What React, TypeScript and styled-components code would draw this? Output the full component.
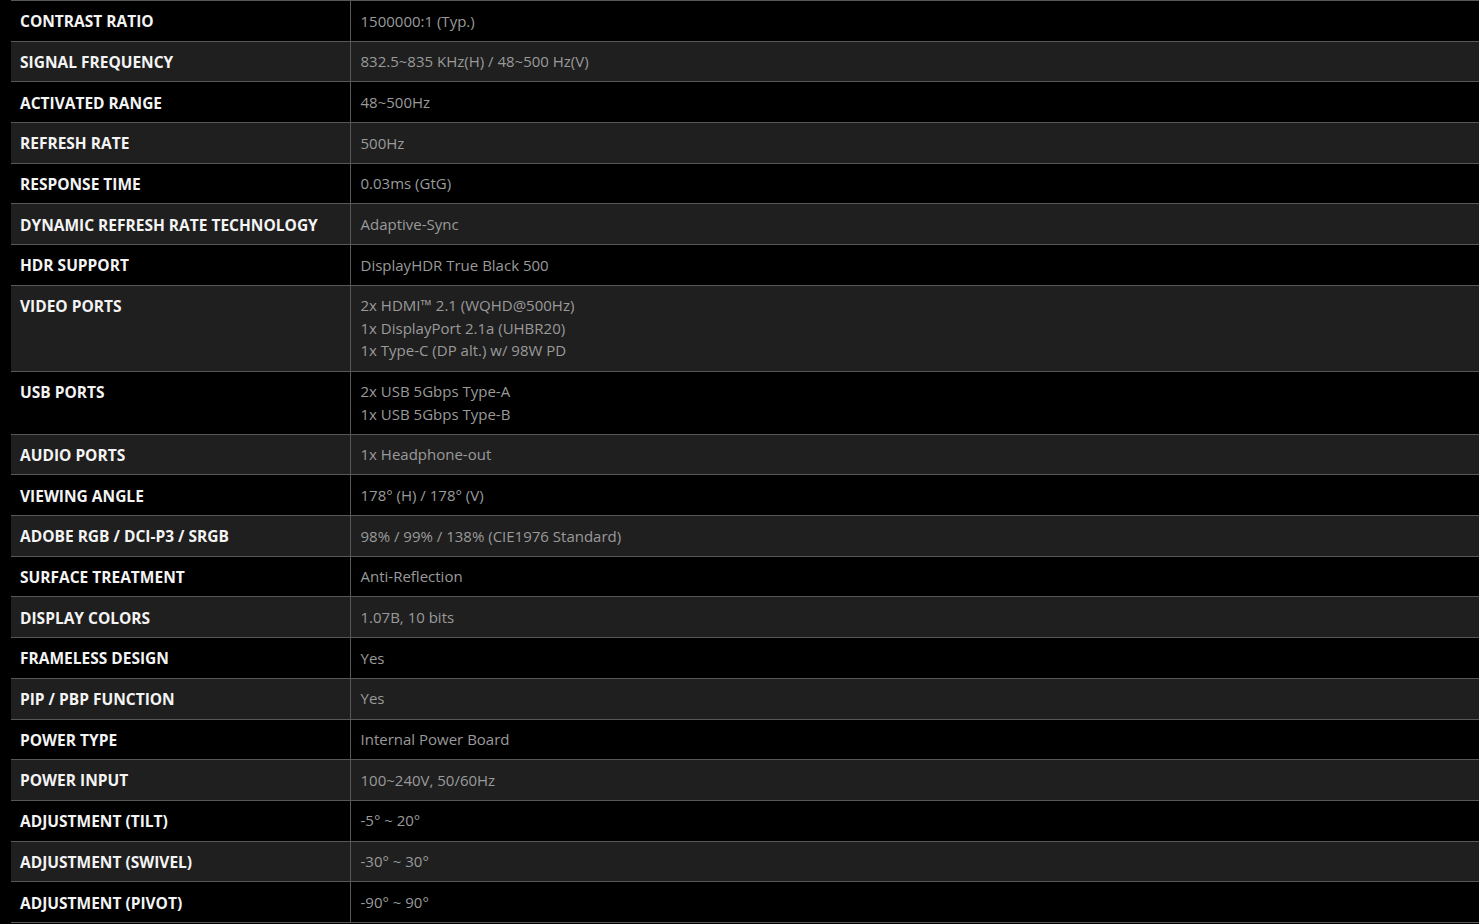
import React from "react";
import styled, { createGlobalStyle } from "styled-components";

const Global = createGlobalStyle`
  html, body { margin: 0; padding: 0; background: #000; }
  body { font-family: "Open Sans", "Noto Sans", sans-serif; }
`;

const Page = styled.div`
  background: #000;
  min-height: 924px;
  padding-left: 11px;
  overflow: hidden;
`;

const Table = styled.table`
  width: 1500px;
  border-collapse: collapse;
  border-top: 1px solid #575757;
`;

const Row = styled.tr<{ $alt: boolean }>`
  background: ${(p) => (p.$alt ? "#1f1f1f" : "#000")};
  border-bottom: 1px solid #575757;
`;

const Label = styled.th`
  width: 339px;
  box-sizing: border-box;
  text-align: left;
  vertical-align: top;
  padding: 9.3px 9px 7.9px 9px;
  font-family: "Open Sans", sans-serif;
  font-weight: 700;
  font-size: 15.5px;
  line-height: 22.5px;
  color: #f4f4f4;
  border-right: 1px solid #575757;
`;

const Value = styled.td`
  vertical-align: top;
  padding: 8.6px 10px;
  font-family: "Open Sans", sans-serif;
  font-size: 15px;
  line-height: 22.5px;
  color: #9a9a9a;
`;

const specs: [string, string[]][] = [
  ["CONTRAST RATIO", ["1500000:1 (Typ.)"]],
  ["SIGNAL FREQUENCY", ["832.5~835 KHz(H) / 48~500 Hz(V)"]],
  ["ACTIVATED RANGE", ["48~500Hz"]],
  ["REFRESH RATE", ["500Hz"]],
  ["RESPONSE TIME", ["0.03ms (GtG)"]],
  ["DYNAMIC REFRESH RATE TECHNOLOGY", ["Adaptive-Sync"]],
  ["HDR SUPPORT", ["DisplayHDR True Black 500"]],
  [
    "VIDEO PORTS",
    [
      "2x HDMI™ 2.1 (WQHD@500Hz)",
      "1x DisplayPort 2.1a (UHBR20)",
      "1x Type-C (DP alt.) w/ 98W PD",
    ],
  ],
  ["USB PORTS", ["2x USB 5Gbps Type-A", "1x USB 5Gbps Type-B"]],
  ["AUDIO PORTS", ["1x Headphone-out"]],
  ["VIEWING ANGLE", ["178° (H) / 178° (V)"]],
  ["ADOBE RGB / DCI-P3 / SRGB", ["98% / 99% / 138% (CIE1976 Standard)"]],
  ["SURFACE TREATMENT", ["Anti-Reflection"]],
  ["DISPLAY COLORS", ["1.07B, 10 bits"]],
  ["FRAMELESS DESIGN", ["Yes"]],
  ["PIP / PBP FUNCTION", ["Yes"]],
  ["POWER TYPE", ["Internal Power Board"]],
  ["POWER INPUT", ["100~240V, 50/60Hz"]],
  ["ADJUSTMENT (TILT)", ["-5° ~ 20°"]],
  ["ADJUSTMENT (SWIVEL)", ["-30° ~ 30°"]],
  ["ADJUSTMENT (PIVOT)", ["-90° ~ 90°"]],
];

export default function App() {
  return (
    <>
      <Global />
      <Page>
        <Table>
          <tbody>
            {specs.map(([k, v], i) => (
              <Row key={k} $alt={i % 2 === 1}>
                <Label>{k}</Label>
                <Value>
                  {v.map((line, j) => (
                    <React.Fragment key={j}>
                      {j > 0 && <br />}
                      {line}
                    </React.Fragment>
                  ))}
                </Value>
              </Row>
            ))}
          </tbody>
        </Table>
      </Page>
    </>
  );
}
